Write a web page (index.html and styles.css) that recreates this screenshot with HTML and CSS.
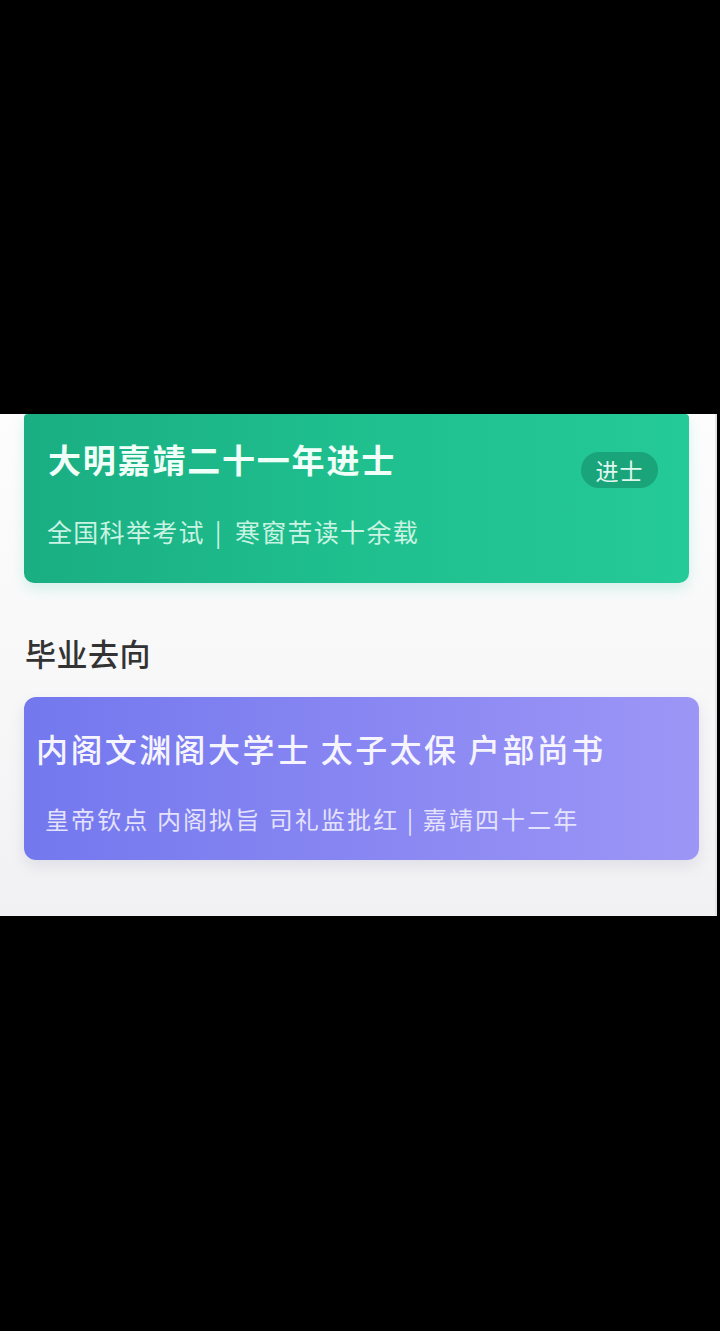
FILE: index.html
```html
<!DOCTYPE html>
<html lang="zh-CN">
<head>
<meta charset="utf-8">
<title>毕业去向</title>
<link rel="stylesheet" href="styles.css">
</head>
<body>
<div class="screen">
  <div class="panel">
    <div class="card card-green">
      <div class="card-row">
        <div class="green-title">大明嘉靖二十一年进士</div>
        <div class="badge">进士</div>
      </div>
      <div class="green-sub">全国科举考试<span class="sep">|</span>寒窗苦读十余载</div>
    </div>
    <div class="section-title">毕业去向</div>
    <div class="card card-purple">
      <div class="purple-title">内阁文渊阁大学士 太子太保 户部尚书</div>
      <div class="purple-sub">皇帝钦点 内阁拟旨 司礼监批红 | 嘉靖四十二年</div>
    </div>
  </div>
</div>
</body>
</html>
```
FILE: styles.css
```css
html, body {
  margin: 0;
  padding: 0;
  background: #000;
}
.screen {
  width: 720px;
  height: 1331px;
  background: #000;
  padding-top: 414px;
  box-sizing: border-box;
  font-family: "Noto Sans CJK SC", "Noto Sans", sans-serif;
}
.panel {
  width: 717px;
  height: 502px;
  box-sizing: border-box;
  padding-left: 24px;
  background: linear-gradient(180deg, #fdfdfd 0%, #f7f7f8 60%, #f1f1f3 100%);
  border-right: 2px solid #e4e4e6;
  overflow: hidden;
}
.card {
  box-sizing: border-box;
  color: #fff;
}
.card-green {
  width: 665px;
  height: 169px;
  padding: 25px 31px 0 24px;
  border-radius: 4px 4px 10px 10px;
  background: linear-gradient(90deg, #1aae82 0%, #1fbf8e 50%, #24ca97 100%);
  box-shadow: 0 6px 14px rgba(40, 200, 160, 0.18);
}
.card-row {
  display: flex;
  justify-content: space-between;
  align-items: flex-start;
}
.green-title {
  font-size: 33px;
  line-height: 40px;
  font-weight: 700;
  letter-spacing: 1.8px;
  color: #f0fff8;
}
.badge {
  margin-top: 13px;
  width: 77px;
  height: 36px;
  border-radius: 18px;
  background: #1aa479;
  color: #dff8ee;
  font-size: 23px;
  line-height: 36px;
  text-align: center;
  letter-spacing: 1px;
}
.green-sub {
  margin-top: 27px;
  margin-left: -1px;
  font-size: 25px;
  line-height: 32px;
  letter-spacing: 1.3px;
  color: #c9f3e2;
}
.sep {
  margin: 0 12px 0 10px;
}
.section-title {
  margin-top: 50px;
  margin-left: 1px;
  font-size: 31px;
  line-height: 40px;
  font-weight: 500;
  color: #333;
  letter-spacing: 0.5px;
}
.card-purple {
  margin-top: 24px;
  width: 675px;
  height: 163px;
  padding: 31px 0 0 12px;
  border-radius: 12px;
  background: linear-gradient(90deg, #7378ee 0%, #8886f2 50%, #9c96f6 100%);
  box-shadow: 0 6px 14px rgba(120, 120, 160, 0.16);
}
.purple-title {
  font-size: 32px;
  line-height: 40px;
  font-weight: 500;
  letter-spacing: 2.4px;
  color: #f6f5ff;
}
.purple-sub {
  margin-top: 35px;
  margin-left: 9px;
  font-size: 24px;
  line-height: 32px;
  letter-spacing: 2.1px;
  color: #e4e2fc;
}
```
